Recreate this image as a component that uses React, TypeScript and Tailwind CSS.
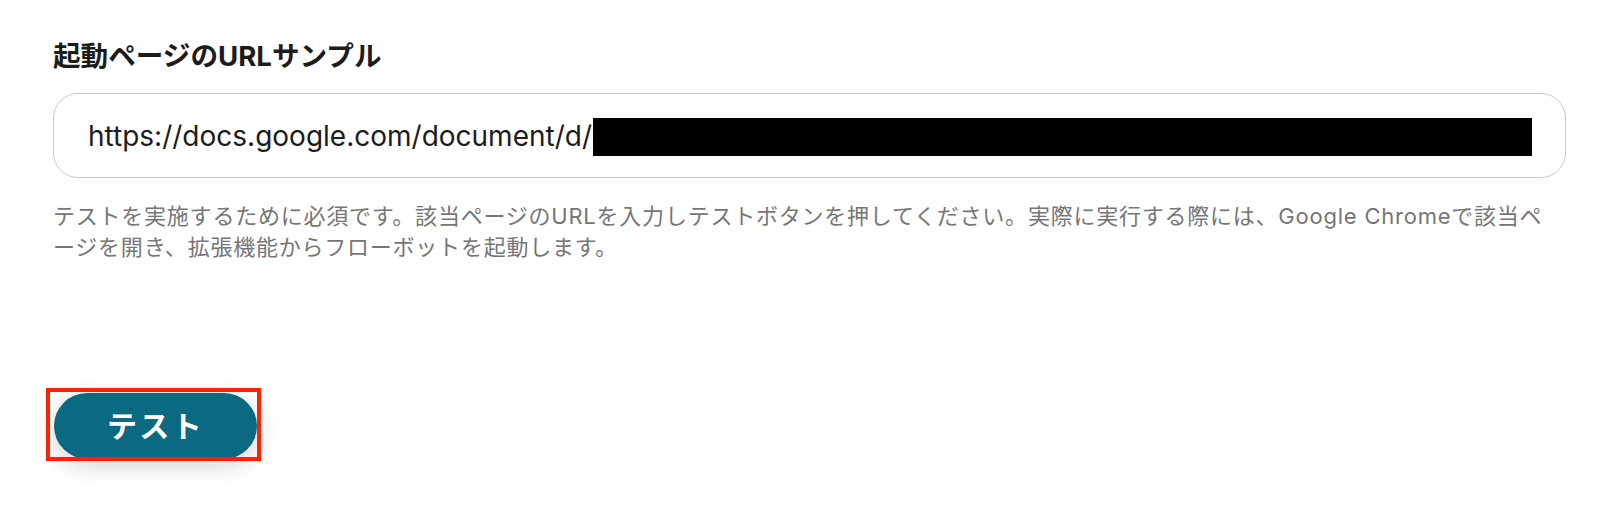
export default function App() {
  return (
    <div className="w-[1600px] h-[510px] bg-white pl-[53px] pr-[34px] pt-[40px] font-['Inter','Noto_Sans_CJK_JP',sans-serif]">
      <h2 className="text-[27.6px] leading-[32px] font-bold text-[#1c1c1c]">起動ページのURLサンプル</h2>

      <div className="mt-[21px] h-[85px] rounded-[25px] border border-[#cacaca] flex items-center pl-[34px] pr-[33px]">
        <span className="text-[28px] text-[#1c1c1c] whitespace-nowrap">https://docs.google.com/document/d/1</span>
        <div className="flex-1 h-[38px] bg-black -ml-[10px] mt-[3px]" />
      </div>

      <p className="mt-[23px] max-w-[1498px] text-[22px] leading-[31px] tracking-[0.035em] text-[#767676]">
        テストを実施するために必須です。該当ページのURLを入力しテストボタンを押してください。実際に実行する際には、Google Chromeで該当ページを開き、拡張機能からフローボットを起動します。
      </p>

      <div className="mt-[130px] ml-[1px] relative w-[203px]">
        <button className="w-[203px] h-[66px] rounded-full bg-[#0b6a82] text-white text-[30px] font-bold tracking-[0.08em] shadow-[0_6px_24px_rgba(0,0,0,0.18)]">
          テスト
        </button>
        <div className="absolute -left-[8px] -top-[5px] -right-[4px] -bottom-[2px] border-[4px] border-[#ff2200]" />
      </div>
    </div>
  );
}
